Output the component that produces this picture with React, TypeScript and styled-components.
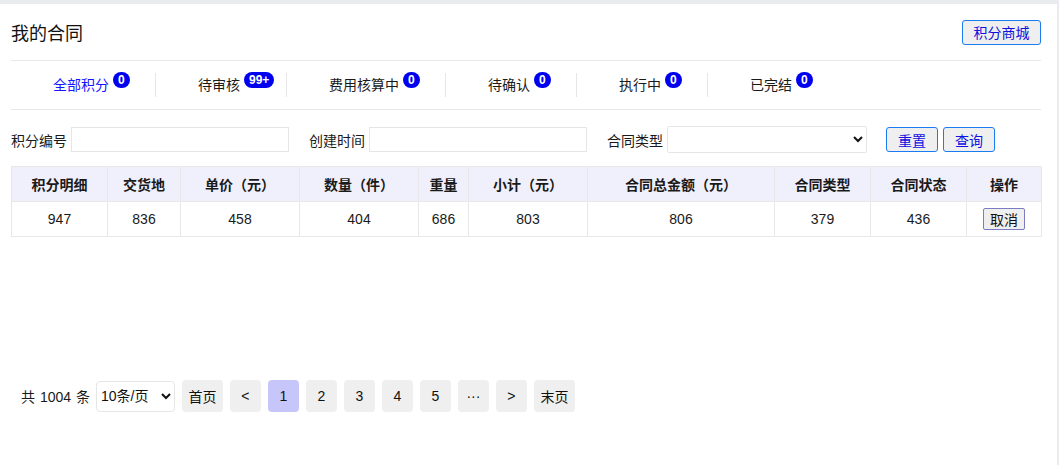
import React from "react";
import styled, { createGlobalStyle } from "styled-components";

const Global = createGlobalStyle`
  html, body { margin: 0; padding: 0; background: #eaebee; }
  body { font-family: "Liberation Sans", "Noto Sans CJK SC", sans-serif; font-size: 14px; color: #1a1a1a; }
  * { box-sizing: border-box; }
`;

const Page = styled.div`
  padding-top: 4px;
  padding-right: 2px;
  height: 465px;
`;

const Card = styled.div`
  background: #fff;
  height: 461px;
  padding: 0 16px 0 11px;
`;

const Header = styled.div`
  height: 57px;
  display: flex;
  align-items: center;
  justify-content: space-between;
  border-bottom: 1px solid #e8e8e8;
`;

const Title = styled.div`
  font-size: 18px;
  color: #111;
`;

const OutlineButton = styled.button<{ $w?: number }>`
  font-family: inherit;
  font-size: 14px;
  height: 25px;
  width: ${(p) => (p.$w ? `${p.$w}px` : "auto")};
  padding: 0 10px;
  color: #1010e0;
  background: #efefef;
  border: 1px solid #1a7cf0;
  border-radius: 3px;
  text-decoration: none;
  cursor: pointer;
`;

const Tabs = styled.div`
  display: flex;
  align-items: center;
  height: 49px;
  border-bottom: 1px solid #e8e8e8;
`;

const Tab = styled.div<{ $active?: boolean; $last?: boolean }>`
  position: relative;
  padding: 0 46px 0 42px;
  height: 24px;
  line-height: 24px;
  border-right: ${(p) => (p.$last ? "none" : "1px solid #e6e6e6")};
  color: ${(p) => (p.$active ? "#1515ff" : "#1a1a1a")};
`;

const TabText = styled.span`
  position: relative;
`;

const Badge = styled.span`
  position: absolute;
  left: 100%;
  top: -5px;
  margin-left: 4px;
  min-width: 16px;
  height: 16px;
  padding: 0 5px;
  border-radius: 8px;
  background: #0000f0;
  color: #fff;
  font-size: 12px;
  font-weight: bold;
  line-height: 16px;
  text-align: center;
  white-space: nowrap;
`;

const Filters = styled.div`
  display: flex;
  align-items: center;
  margin-top: 16px;
  height: 27px;
`;

const Field = styled.label`
  display: flex;
  align-items: center;
  gap: 4px;
  margin-right: 20px;
`;

const TextInput = styled.input`
  width: 218px;
  height: 25px;
  border: 1px solid #e6e6e6;
  outline: none;
  font-family: inherit;
`;

const Select = styled.select<{ $w: number; $h: number; $r: number }>`
  width: ${(p) => p.$w}px;
  height: ${(p) => p.$h}px;
  border: 1px solid #e6e6e6;
  border-radius: ${(p) => p.$r}px;
  background: #fff;
  font-family: inherit;
  font-size: 14px;
  color: #111;
`;

const ButtonGroup = styled.div`
  display: flex;
  gap: 5px;
  margin-left: -1px;
`;

const Table = styled.table`
  margin-top: 13px;
  width: 1030px;
  border-collapse: collapse;
  table-layout: fixed;
  th, td {
    border: 1px solid #e8e8e8;
    text-align: center;
    height: 35px;
    padding: 0;
  }
  th {
    background: #f0f0fc;
    font-weight: bold;
  }
`;

const CancelButton = styled.button`
  font-family: inherit;
  font-size: 14px;
  height: 22px;
  padding: 0 6px;
  background: #efefef;
  border: 1px solid #7c7cc4;
  border-radius: 2px;
  color: #111;
`;

const Pager = styled.div`
  display: flex;
  align-items: center;
  margin-top: 143px;
  padding-left: 10px;
  gap: 7px;
`;

const Total = styled.span`
  word-spacing: 1px;
  margin-right: -1px;
`;

const PageButton = styled.button<{ $active?: boolean; $wide?: boolean }>`
  font-family: inherit;
  font-size: 14px;
  height: 32px;
  width: ${(p) => (p.$wide ? "41px" : "31px")};
  padding: 0;
  border: none;
  border-radius: 4px;
  background: ${(p) => (p.$active ? "#c6c6fa" : "#efefef")};
  color: #111;
`;

const tabs = [
  { label: "全部积分", count: "0", active: true },
  { label: "待审核", count: "99+" },
  { label: "费用核算中", count: "0" },
  { label: "待确认", count: "0" },
  { label: "执行中", count: "0" },
  { label: "已完结", count: "0" },
];

const cols = [
  { t: "积分明细", w: 96 },
  { t: "交货地", w: 73 },
  { t: "单价（元）", w: 119 },
  { t: "数量（件）", w: 119 },
  { t: "重量", w: 50 },
  { t: "小计（元）", w: 119 },
  { t: "合同总金额（元）", w: 187 },
  { t: "合同类型", w: 96 },
  { t: "合同状态", w: 96 },
  { t: "操作", w: 75 },
];

const row = ["947", "836", "458", "404", "686", "803", "806", "379", "436"];

export default function App() {
  return (
    <Page>
      <Global />
      <Card>
        <Header>
          <Title>我的合同</Title>
          <OutlineButton $w={79}>积分商城</OutlineButton>
        </Header>
        <Tabs>
          {tabs.map((t, i) => (
            <Tab key={t.label} $active={t.active} $last={i === tabs.length - 1}>
              <TabText>
                {t.label}
                <Badge>{t.count}</Badge>
              </TabText>
            </Tab>
          ))}
        </Tabs>
        <Filters>
          <Field>
            积分编号
            <TextInput />
          </Field>
          <Field>
            创建时间
            <TextInput />
          </Field>
          <Field>
            合同类型
            <Select $w={200} $h={27} $r={2}>
              <option></option>
            </Select>
          </Field>
          <ButtonGroup>
            <OutlineButton $w={52}>重置</OutlineButton>
            <OutlineButton $w={52}>查询</OutlineButton>
          </ButtonGroup>
        </Filters>
        <Table>
          <colgroup>
            {cols.map((c) => (
              <col key={c.t} style={{ width: c.w }} />
            ))}
          </colgroup>
          <thead>
            <tr>
              {cols.map((c) => (
                <th key={c.t}>{c.t}</th>
              ))}
            </tr>
          </thead>
          <tbody>
            <tr>
              {row.map((v, i) => (
                <td key={i}>{v}</td>
              ))}
              <td>
                <CancelButton>取消</CancelButton>
              </td>
            </tr>
          </tbody>
        </Table>
        <Pager>
          <Total>共 1004 条</Total>
          <Select $w={79} $h={31} $r={4}>
            <option>10条/页</option>
          </Select>
          <PageButton $wide>首页</PageButton>
          <PageButton>&lt;</PageButton>
          <PageButton $active>1</PageButton>
          <PageButton>2</PageButton>
          <PageButton>3</PageButton>
          <PageButton>4</PageButton>
          <PageButton>5</PageButton>
          <PageButton>···</PageButton>
          <PageButton>&gt;</PageButton>
          <PageButton $wide>末页</PageButton>
        </Pager>
      </Card>
    </Page>
  );
}
